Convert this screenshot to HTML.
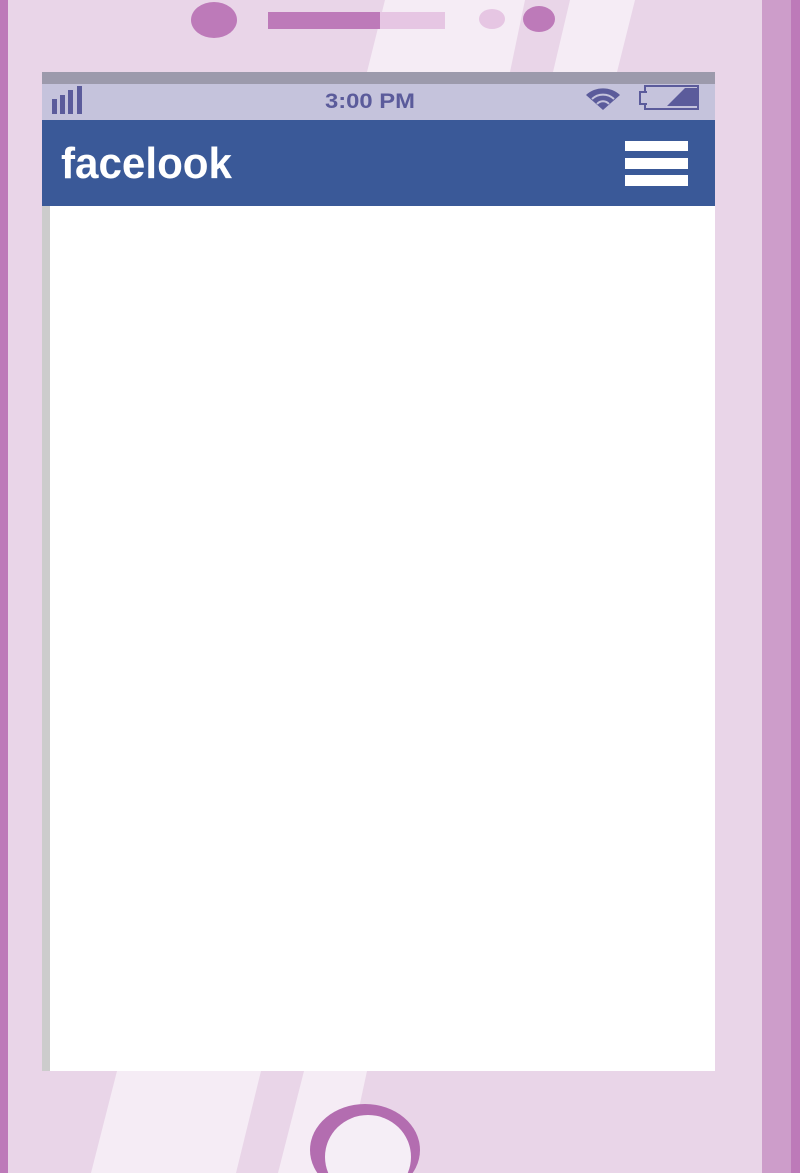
<!DOCTYPE html>
<html><head><style>
body{margin:0;width:800px;height:1173px;overflow:hidden;position:relative;background:#e9d5e8;font-family:"Liberation Sans",sans-serif}
</style></head><body>
<svg width="800" height="1173" style="position:absolute;left:0;top:0">
<rect x="0" y="0" width="800" height="1173" fill="#e9d5e8"/>
<rect x="0" y="0" width="8" height="1173" fill="#bd7ab9"/>
<rect x="762" y="0" width="38" height="1173" fill="#cd9dca"/>
<rect x="791" y="0" width="9" height="1173" fill="#bd7ab9"/>
<polygon points="385,0 525,0 510,72 367,72" fill="#f5ecf5"/>
<polygon points="570,0 635,0 617,72 553,72" fill="#f5ecf5"/>
<polygon points="117,1071 261,1071 236,1173 91,1173" fill="#f5ecf5"/>
<polygon points="304,1071 367,1071 345,1173 278,1173" fill="#f5ecf5"/>
<ellipse cx="214" cy="20" rx="23" ry="18" fill="#bd7ab9"/>
<rect x="268" y="12" width="177" height="17" fill="#e6c6e3"/>
<rect x="268" y="12" width="112" height="17" fill="#bd7ab9"/>
<ellipse cx="492" cy="19" rx="13" ry="10" fill="#e6c6e3"/>
<ellipse cx="539" cy="19" rx="16" ry="13" fill="#bd7ab9"/>
<ellipse cx="365" cy="1150" rx="55" ry="46" fill="#b36db0"/>
<ellipse cx="368" cy="1157" rx="43" ry="42" fill="#f5eef6"/>
<rect x="42" y="72" width="673" height="12" fill="#9c9aac"/>
<rect x="42" y="84" width="673" height="36" fill="#c5c3dc"/>
<rect x="42" y="120" width="673" height="86" fill="#3a5998"/>
<rect x="42" y="206" width="673" height="865" fill="#fff"/>
<rect x="42" y="206" width="8" height="865" fill="#cccccc"/>
<g fill="#5b5b9b">
<rect x="52" y="99" width="5" height="15"/><rect x="60" y="95" width="5" height="19"/><rect x="68" y="90" width="5" height="24"/><rect x="77" y="86" width="5" height="28"/>
<polygon points="667,106 697,106 697,88 685,88"/>
</g>
<rect x="645" y="86" width="53" height="23" fill="none" stroke="#5b5b9b" stroke-width="2"/>
<rect x="640" y="92" width="6" height="12" fill="none" stroke="#5b5b9b" stroke-width="2"/>
<rect x="644" y="93" width="3" height="10" fill="#c5c3dc"/>
<path d="M586 95 A25 25 0 0 1 620 95 L603 110 Z" fill="#5b5b9b"/>
<g fill="none" stroke="#c5c3dc" stroke-width="2">
<path d="M592 99 A16 16 0 0 1 614 99"/><path d="M597 104 A8 8 0 0 1 609 104"/>
</g>
<g fill="#fff"><rect x="625" y="141" width="63" height="10"/><rect x="625" y="158" width="63" height="11"/><rect x="625" y="175" width="63" height="11"/></g>
<text x="370" y="108" text-anchor="middle" font-family="Liberation Sans" font-weight="bold" font-size="21" fill="#5b5b9b" textLength="90" lengthAdjust="spacingAndGlyphs">3:00 PM</text>
<text x="61" y="178" font-family="Liberation Sans" font-weight="bold" font-size="44" fill="#fff" textLength="171" lengthAdjust="spacingAndGlyphs">facelook</text>
</svg>
</body></html>
